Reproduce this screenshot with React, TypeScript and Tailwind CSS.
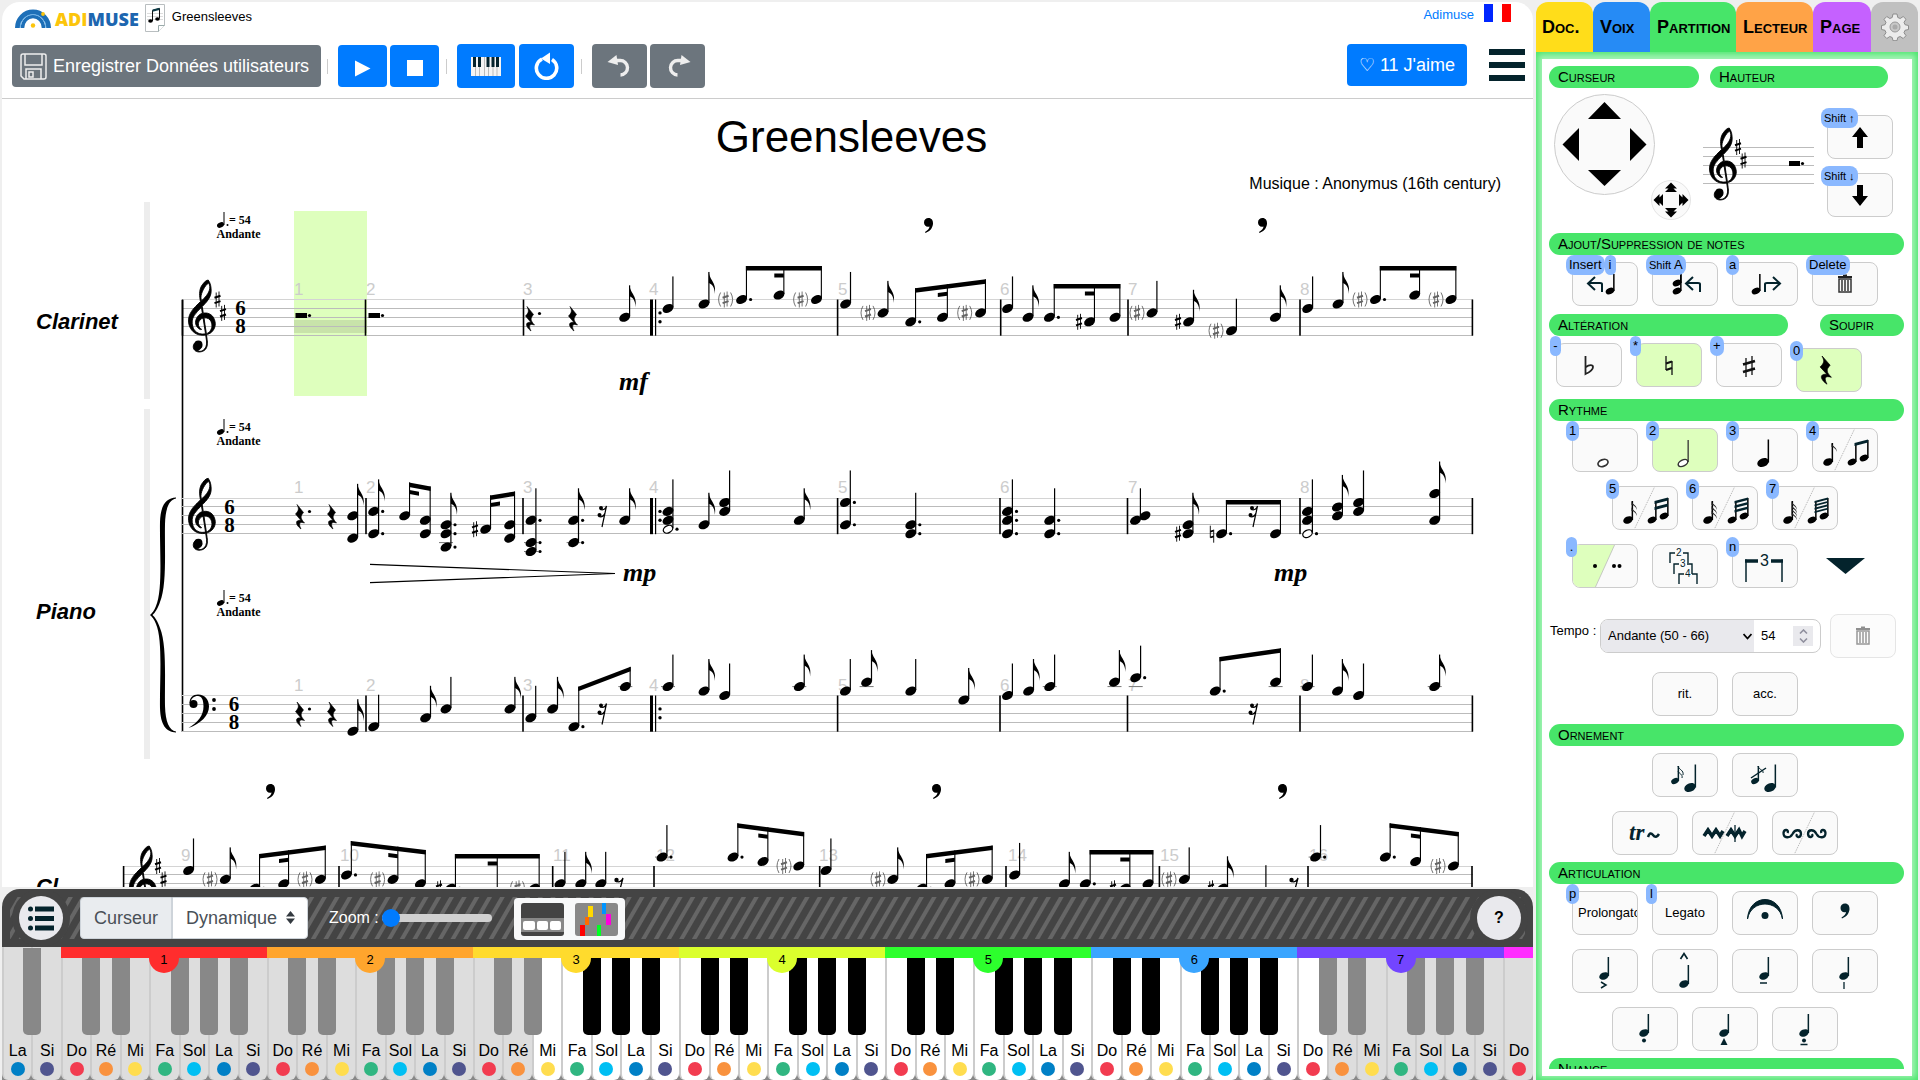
import React from "react";

/* ---------- Music engraving primitives ---------- */

const HALF = 4.46;

type Chord = {
  x: number;
  s: number[];
  eighth?: boolean;
  dot?: boolean;
  hollow?: number;
  second?: number;
  ledger?: number[];
};
type BeamGroup = { notes: Chord[]; y1: number; y2: number; sub?: number; dir?: 1 | -1 };
type Mark = { x: number; s: number; kind: "sharp" | "paren" | "natural" };
type Rest = { x: number; y: number; kind: "quarter" | "eighth" | "sixteenth"; dot?: boolean };
type StaffData = {
  y: number;
  x1: number;
  bars: number[];
  numbers: [number, number][];
  chords: Chord[];
  beams: BeamGroup[];
  marks: Mark[];
  rests: Rest[];
  repeat?: boolean;
};

const CLEF_PATH =
  "m12.049 3.5296c0.305 3.1263-2.019 5.6563-4.0772 7.7014-0.9349 0.897-0.155 0.148-0.6437 0.594-0.1022-0.479-0.2986-1.731-0.2802-2.11 0.1304-2.6939 2.3198-6.5875 4.2381-8.0236 0.309 0.5767 0.563 0.6231 0.763 1.8382zm0.651 16.142c-1.232-0.906-2.85-1.144-4.3336-0.885-0.1913-1.255-0.3827-2.51-0.574-3.764 2.3506-2.329 4.9066-5.0322 5.0406-8.5394 0.059-2.232-0.276-4.6714-1.678-6.4836-1.7004 0.12823-2.8995 2.156-3.8019 3.4165-1.4889 2.6705-1.1414 5.9169-0.57 8.7965-0.8094 0.952-1.9296 1.743-2.7274 2.734-2.3561 2.308-4.4085 5.43-4.0046 8.878 0.18332 3.334 2.5894 6.434 5.8702 7.227 1.2457 0.315 2.5639 0.346 3.8241 0.099 0.2199 2.25 1.0266 4.629 0.0925 6.813-0.7007 1.598-2.7875 3.004-4.3325 2.192-0.5994-0.316-0.1137-0.051-0.478-0.252 1.0698-0.257 1.9996-1.036 2.26-1.565 0.8378-1.464-0.3998-3.639-2.1554-3.358-2.262 0.046-3.1904 3.14-1.7356 4.685 1.3468 1.52 3.833 1.312 5.4301 0.318 1.8125-1.18 2.0395-3.544 1.8325-5.562-0.07-0.678-0.403-2.67-0.444-3.387 0.697-0.249 0.209-0.059 1.193-0.449 2.66-1.053 4.357-4.259 3.594-7.122-0.318-1.469-1.044-2.914-2.302-3.792zm0.561 5.757c0.214 1.991-1.053 4.321-3.079 4.96-0.136-0.795-0.172-1.011-0.2626-1.475-0.4822-2.46-0.744-4.987-1.116-7.481 1.6246-0.168 3.4576 0.543 4.0226 2.184 0.244 0.577 0.343 1.197 0.435 1.812zm-5.1486 5.196c-2.5441 0.141-4.9995-1.595-5.6343-4.081-0.749-2.153-0.5283-4.63 0.8207-6.504 1.1151-1.702 2.6065-3.105 4.0286-4.543 0.183 1.127 0.366 2.254 0.549 3.382-2.9906 0.782-5.0046 4.725-3.215 7.451 0.5324 0.764 1.9765 2.223 2.7655 1.634-1.102-0.683-2.0033-1.859-1.8095-3.227-0.0821-1.282 1.3699-2.911 2.6513-3.198 0.4384 2.869 0.9413 6.073 1.3797 8.943-0.5054 0.1-1.0211 0.143-1.536 0.143z";

const TrebleClef = ({ x, y }: { x: number; y: number }) => (
  <g transform={`translate(${x} ${y}) scale(1.765)`}>
    <path d={CLEF_PATH} stroke="#000" strokeWidth="0.5" />
    <circle cx="5.6" cy="36.6" r="2.3" />
  </g>
);

const BassClef = ({ x, y }: { x: number; y: number }) => (
  <g transform={`translate(${x} ${y})`}>
    <circle cx="5.5" cy="9.5" r="4" />
    <path d="M1.5 9C1.500 3 5 0 10 0C17 0 21 5 21 12C21 21 13 29 0.500 33.500C10 27.500 15.500 21 15.500 12C15.500 5 13.500 1.500 10 1.500C6 1.500 3 4 2.500 8Z" />
    <circle cx="26" cy="5.500" r="1.9" />
    <circle cx="26" cy="14.500" r="1.9" />
  </g>
);

const Sharp = ({ x, y }: { x: number; y: number }) => (
  <g transform={`translate(${x} ${y})`} stroke="#000" fill="none">
    <path d="M-1.3 -7V8M1.5 -8V7" strokeWidth="0.9" />
    <path d="M-3 -1.800L3 -3.800M-3 3.600L3 1.600" strokeWidth="2" />
  </g>
);

const Natural = ({ x, y }: { x: number; y: number }) => (
  <g transform={`translate(${x} ${y})`} stroke="#000" fill="none">
    <path d="M-1.700 -8V4M1.700 -4V9" strokeWidth="0.9" />
    <path d="M-1.700 -2L1.700 -3.200M-1.700 3.800L1.700 2.600" strokeWidth="1.8" />
  </g>
);

const ParenSharp = ({ x, y }: { x: number; y: number }) => (
  <g opacity="0.6">
    <Sharp x={x} y={y} />
    <path
      d={`M${x - 5} ${y - 7}q-4 7 0 14M${x + 5} ${y - 7}q4 7 0 14`}
      fill="none"
      stroke="#000"
      strokeWidth="0.9"
    />
  </g>
);

const Head = ({ x, y, hollow }: { x: number; y: number; hollow?: boolean }) =>
  hollow ? (
    <ellipse cx={x} cy={y} rx="5" ry="3.500" fill="#fff" stroke="#000" strokeWidth="1.300" transform={`rotate(-28 ${x} ${y})`} />
  ) : (
    <ellipse cx={x} cy={y} rx="5.800" ry="4.100" transform={`rotate(-28 ${x} ${y})`} />
  );

const QUARTER_REST =
  "M2 0L8.500 8C5 12 5.500 14 9.500 18.500C5 17 3 18.500 6 24.500C0 20 0 15 6 16L0.500 9.500C4 6 4 4 2 0Z";

const RestGlyph = ({ r }: { r: Rest }) => (
  <g transform={`translate(${r.x} ${r.y})`}>
    {r.kind === "quarter" && <path d={QUARTER_REST} transform="translate(-5 0)" stroke="#000" strokeWidth="0.6" />}
    {r.kind === "eighth" && (
      <g>
        <circle cx="-2.500" cy="3" r="2.200" />
        <path d="M-3 4.500Q2 6 4 1L0 16" fill="none" stroke="#000" strokeWidth="1.300" />
      </g>
    )}
    {r.kind === "sixteenth" && (
      <g>
        <circle cx="-1" cy="2" r="2" />
        <circle cx="-2.500" cy="9" r="2" />
        <path d="M-2 3.500Q3 5 4.500 0L0 21M-3.500 10.500Q1 12 3 7" fill="none" stroke="#000" strokeWidth="1.200" />
      </g>
    )}
    {r.dot && <circle cx="9.500" cy="7" r="1.600" />}
  </g>
);

const FLAG = "M0 0C1 9 8 10 6 22C6 15 3 12 0 11Z";

function Heads({ c, y }: { c: Chord; y: number }) {
  return (
    <g>
      {c.ledger?.map((l) => (
        <rect key={l} x={c.x - 7} y={y + l * HALF - 0.5} width="14" height="1" fill="#777" />
      ))}
      {c.s.map((s) => (
        <g key={s}>
          <Head x={c.x} y={y + s * HALF} />
          {c.dot && <circle cx={c.x + 9} cy={y + s * HALF} r="1.600" />}
        </g>
      ))}
      {c.hollow !== undefined && (
        <g>
          <Head x={c.x} y={y + c.hollow * HALF} hollow />
          <circle cx={c.x + 9} cy={y + c.hollow * HALF} r="1.600" />
        </g>
      )}
      {c.second !== undefined && <Head x={c.x + 9.5} y={y + c.second * HALF} />}
    </g>
  );
}

function ChordGlyph({ c, y }: { c: Chord; y: number }) {
  const top = y + Math.min(...c.s) * HALF - 32;
  const bottom = y + Math.max(...c.s, c.hollow ?? -9) * HALF - 1;
  const sx = c.x + 4.8;
  return (
    <g>
      <Heads c={c} y={y} />
      <rect x={sx - 0.5} y={top} width="1.200" height={bottom - top} />
      {c.eighth && <path d={FLAG} transform={`translate(${sx} ${top})`} />}
    </g>
  );
}

function Beam({ b, y }: { b: BeamGroup; y: number }) {
  const first = b.notes[0].x + 4.8;
  const last = b.notes[b.notes.length - 1].x + 5.3;
  const at = (x: number) => b.y1 + ((b.y2 - b.y1) * (x - first)) / (last - first);
  const sub = b.sub !== undefined ? b.notes[b.sub].x + 4.8 : 0;
  const end = sub + 9.5 * (b.dir ?? -1);
  return (
    <g>
      {b.notes.map((n) => {
        const sx = n.x + 4.8;
        return (
          <g key={n.x}>
            <Heads c={n} y={y} />
            <rect x={sx - 0.5} y={at(sx)} width="1.100" height={y + Math.max(...n.s) * HALF - 1 - at(sx)} />
          </g>
        );
      })}
      <path d={`M${first - 0.5} ${b.y1}L${last} ${b.y2}v4.500L${first - 0.5} ${b.y1 + 4.5}Z`} />
      {b.sub !== undefined && (
        <path d={`M${sub} ${at(sub) + 7.5}L${end} ${at(end) + 7.5}v4L${sub} ${at(sub) + 11.5}Z`} />
      )}
    </g>
  );
}

function Staff({ d }: { d: StaffData }) {
  return (
    <g>
      {[0, 2, 4, 6, 8].map((i) => (
        <rect key={i} x={d.x1} y={Math.round(d.y + i * HALF - 0.5)} width={1473 - d.x1} height="1" fill={i === 0 ? "#d4d4d4" : "#bbb"} />
      ))}
      {d.numbers.map(([n, x]) => (
        <text key={n} x={x} y={d.y - 5} fontSize="17" fill="#ccc">
          {n}
        </text>
      ))}
      {d.bars.map((x) => (
        <rect key={x} x={x - 0.8} y={d.y} width="1.600" height={8 * HALF + 0.5} />
      ))}
      {d.repeat && (
        <g>
          <rect x="650" y={d.y} width="3" height={8 * HALF + 0.5} />
          <rect x="655" y={d.y} width="1.200" height={8 * HALF + 0.5} />
          <circle cx="660" cy={d.y + 3 * HALF} r="1.700" />
          <circle cx="660" cy={d.y + 5 * HALF} r="1.700" />
        </g>
      )}
      {d.marks.map((m, i) => {
        const y = d.y + m.s * HALF;
        if (m.kind === "sharp") return <Sharp key={i} x={m.x} y={y} />;
        if (m.kind === "natural") return <Natural key={i} x={m.x} y={y} />;
        return <ParenSharp key={i} x={m.x} y={y} />;
      })}
      {d.rests.map((r, i) => (
        <RestGlyph key={i} r={r} />
      ))}
      {d.chords.map((c, i) => (
        <ChordGlyph key={i} c={c} y={d.y} />
      ))}
      {d.beams.map((b, i) => (
        <Beam key={i} b={b} y={d.y} />
      ))}
    </g>
  );
}

const Meter = ({ x, y }: { x: number; y: number }) => (
  <g fontFamily="Liberation Serif, serif" fontWeight="bold" fontSize="21" textAnchor="middle">
    <text x={x} y={y}>6</text>
    <text x={x} y={y + 18}>8</text>
  </g>
);

const TempoMark = ({ y }: { y: number }) => (
  <g fontFamily="Liberation Serif, serif" fontWeight="bold" fontSize="12">
    <ellipse cx="220.500" cy={y + 1} rx="3.700" ry="2.500" transform={`rotate(-25 220.500 ${y + 1})`} />
    <rect x="223.500" y={y - 12} width="1" height="13" />
    <circle cx="227.500" cy={y + 1} r="1" />
    <text x="229" y={y}>= 54</text>
    <text x="216.500" y={y + 14}>Andante</text>
  </g>
);

const Breath = ({ x, y }: { x: number; y: number }) => (
  <path
    transform={`translate(${x} ${y})`}
    d="M-4.500 4.500C-4.500 1.500 -2.500 0 0 0C3 0 4.800 2.300 4.500 6C4 10.500 1 13.500 -3 15L-3.500 14C-1 12.500 1 10.500 1 8.500C-2 9.500 -4.500 7.500 -4.500 4.500Z"
  />
);

const Dynamic = ({ x, y, children }: { x: number; y: number; children: React.ReactNode }) => (
  <text x={x} y={y} fontFamily="Liberation Serif, serif" fontStyle="italic" fontWeight="bold" fontSize="26">
    {children}
  </text>
);

const P = (x: number, s: number): Mark => ({ x, s, kind: "paren" });
const S = (x: number, s: number): Mark => ({ x, s, kind: "sharp" });
const q = (x: number, ...s: number[]): Chord => ({ x, s });
const qd = (x: number, ...s: number[]): Chord => ({ x, s, dot: true });
const e = (x: number, ...s: number[]): Chord => ({ x, s, eighth: true });
const ed = (x: number, ...s: number[]): Chord => ({ x, s, eighth: true, dot: true });
const led = (c: Chord, ...ledger: number[]): Chord => ({ ...c, ledger });

const clarinet: StaffData = {
  y: 299.5,
  x1: 182,
  repeat: true,
  bars: [182.5, 365.5, 523.5, 837.6, 1000.7, 1128, 1300, 1472.4],
  numbers: [[1, 294], [2, 366], [3, 523], [4, 649], [5, 838], [6, 1000], [7, 1128], [8, 1300]],
  rests: [
    { x: 530, y: 306.5, kind: "quarter", dot: true },
    { x: 573, y: 306.5, kind: "quarter" },
  ],
  marks: [
    S(217.5, 0), S(223, 3), P(725.6, 0), P(800.6, 0), P(868, 3), P(964.7, 3), S(1079, 5), P(1137, 3),
    S(1178, 5), P(1216, 7), P(1360, 0), P(1436, 0),
  ],
  chords: [
    e(624.7, 4), q(668, 2), e(704, 1), q(845.6, 1), e(883, 3), q(1007.6, 2), e(1028, 4), q(1152, 3),
    e(1188.6, 5), q(1231.5, 7), e(1275.4, 4), q(1307.7, 2), e(1338, 1),
  ],
  beams: [
    { notes: [qd(741.6, 0), q(779, -1), q(816.5, 0)], y1: 266, y2: 266, sub: 1 },
    { notes: [qd(910.7, 5), q(942.5, 4), q(980.6, 3)], y1: 288.3, y2: 279.3, sub: 1 },
    { notes: [qd(1049.4, 4), q(1089.6, 5), q(1115, 4)], y1: 284, y2: 284, sub: 1 },
    { notes: [qd(1375.5, 0), q(1414.7, -1), q(1451, 0)], y1: 266, y2: 266, sub: 1 },
  ],
};

const pianoTreble: StaffData = {
  y: 498,
  x1: 182,
  repeat: true,
  bars: [366, 523, 837.6, 1000, 1127.5, 1300, 1472.4],
  numbers: clarinet.numbers,
  rests: [
    { x: 300, y: 504.5, kind: "quarter", dot: true },
    { x: 332, y: 504.5, kind: "quarter" },
    { x: 602, y: 506, kind: "sixteenth" },
    { x: 1253, y: 506, kind: "sixteenth" },
  ],
  marks: [S(475, 7), S(1178, 8), { x: 1212, s: 8, kind: "natural" }],
  chords: [
    e(352.7, 4, 9), ed(373.7, 3, 8), led(ed(446, 6, 8, 11), 10), led(qd(531, 5, 10, 12), 10, 12),
    led(ed(573.6, 5, 10), 10), e(624.7, 5), { x: 668, s: [3, 5], hollow: 7 }, e(704, 6), q(724.7, 1, 3),
    e(799.3, 5), qd(845.4, 1, 6), qd(910.8, 6, 8), qd(1007.5, 3, 5, 8), qd(1049.7, 5, 8),
    { x: 1135.5, s: [5], second: 4 }, e(1188, 6, 8), { x: 1307.5, s: [3, 5], hollow: 8 }, e(1337.5, 2, 4),
    q(1358.6, 1, 3), e(1434.7, -1, 5),
  ],
  beams: [
    { notes: [q(404.7, 4), q(425.3, 5, 8)], y1: 482.5, y2: 486.5, sub: 0, dir: 1 },
    { notes: [q(485.7, 7), q(509.7, 6, 9)], y1: 495.5, y2: 491.5, sub: 0, dir: 1 },
    { notes: [qd(1221.6, 8), q(1275.6, 8)], y1: 500, y2: 500 },
  ],
};

const pianoBass: StaffData = {
  y: 695.5,
  x1: 182,
  repeat: true,
  bars: [366, 523, 837.6, 1000, 1127.5, 1300, 1472.4],
  numbers: clarinet.numbers,
  rests: [
    { x: 300, y: 702, kind: "quarter", dot: true },
    { x: 332, y: 702, kind: "quarter" },
    { x: 602, y: 703.5, kind: "sixteenth" },
    { x: 1253, y: 703.5, kind: "sixteenth" },
  ],
  marks: [],
  chords: [
    e(352.9, 8), q(373.7, 7), e(425.6, 5), q(446, 3), e(510, 3), q(530.8, 5), e(552.6, 3), led(q(668, -2), -2),
    e(704, -1), q(724.7, 0), led(e(799.3, -2), -2), q(845.4, -1), led(e(866.6, -3), -2), q(910.8, -1),
    e(963.8, 1), q(1007.5, 0), e(1028.6, -1), led(q(1049.7, -2), -2), led(e(1114.5, -3), -2),
    led(qd(1135.7, -4), -2), led(q(1307.5, -2), -2), e(1337.5, -1), q(1358.6, 0), led(e(1434.7, -2), -2),
  ],
  beams: [
    { notes: [qd(573.9, 7), led(q(625.3, -2), -2)], y1: 686.7, y2: 666.7 },
    { notes: [qd(1215.2, -1), led(q(1275.6, -3), -2)], y1: 657, y2: 648.3 },
  ],
};

const clarinetNext: StaffData = {
  y: 866,
  x1: 123,
  bars: [123.6, 339, 552.7, 654, 819.7, 1006, 1159.4, 1308, 1472],
  numbers: [[9, 181], [10, 340], [11, 553], [12, 656], [13, 819], [14, 1008], [15, 1160], [16, 1309]],
  rests: [
    { x: 619, y: 877, kind: "eighth" },
    { x: 1294, y: 877, kind: "eighth" },
  ],
  marks: [
    S(158, 0), S(163.5, 3), P(210, 3), P(305, 3), P(377.6, 3), S(439, 5), P(517.5, 5), P(784, 0), P(878, 3),
    P(972, 3), S(1113, 5), P(1169, 3), S(1211, 5), P(1438, 0),
  ],
  chords: [
    q(188.6, 1), e(225.3, 3), q(560, 4), e(580.8, 4), q(600.8, 4), led(qd(662, -2), -2), q(826, 1), e(892.8, 3),
    q(1014.7, 2), e(1064.4, 4), q(1184.3, 3), e(1222.6, 5), q(1261, 7), led(qd(1315.6, -2), -2),
  ],
  beams: [
    { notes: [qd(254.7, 5), q(283.7, 4), q(320.4, 3)], y1: 854, y2: 845.5, sub: 1 },
    { notes: [qd(346.5, 2), q(393, 3), q(420.4, 4)], y1: 841, y2: 850, sub: 1 },
    { notes: [qd(450.6, 5), q(492.4, 6), q(534.3, 5)], y1: 854, y2: 854, sub: 1 },
    { notes: [qd(733, -2), q(763, -1), q(798.8, 0)], y1: 823.3, y2: 832, sub: 1 },
    { notes: [qd(921.7, 5), q(950, 4), q(987.3, 3)], y1: 854, y2: 845.5, sub: 1 },
    { notes: [qd(1085.3, 4), q(1125, 5), q(1148, 4)], y1: 850, y2: 850, sub: 1 },
    { notes: [qd(1385.3, -2), q(1415.6, -1), q(1453.4, 0)], y1: 823.3, y2: 832, sub: 1 },
  ],
};

/* ---------- Score ---------- */

function Score() {
  return (
    <main className="min-h-0 flex-1 overflow-hidden bg-white">
      <h1 className="pt-[13px] pl-[168px] text-center text-[44px] leading-[50px]">Greensleeves</h1>
      <p className="mt-[10px] pr-[32px] text-right text-base leading-[24px]">Musique : Anonymus (16th century)</p>

      <section className="mt-[6px] flex h-[207px]">
        <h2 className="w-[142px] shrink-0 pt-[106px] pl-[34px] text-[22px] leading-[28px] font-bold italic">Clarinet</h2>
        <div className="h-[197px] w-[6px] shrink-0 bg-[#ededed]" />
        <svg className="shrink-0" width="1383" height="207" viewBox="150 202 1383 207">
          <rect x="294" y="211" width="73" height="185" fill="#deffbd" />
          <rect x="294" y="320" width="73" height="13" fill="#c8e3aa" />
          <Staff d={clarinet} />
          <rect x="181.700" y="300" width="1.600" height="109" />
          <TrebleClef x={188.5} y={280} />
          <Meter x={240.5} y={315} />
          <TempoMark y={224} />
          <rect x="295.500" y="313" width="11.500" height="5" />
          <circle cx="309.500" cy="315.500" r="1.600" />
          <rect x="368.500" y="313" width="11.500" height="5" />
          <circle cx="382.500" cy="315.500" r="1.600" />
          <Breath x={928.5} y={218} />
          <Breath x={1262.5} y={218} />
          <Dynamic x={619} y={390}>mf</Dynamic>
        </svg>
      </section>

      <section className="flex h-[360px]">
        <h2 className="w-[142px] shrink-0 pt-[189px] pl-[34px] text-[22px] leading-[28px] font-bold italic">Piano</h2>
        <div className="h-[350px] w-[6px] shrink-0 bg-[#ededed]" />
        <svg className="shrink-0" width="1383" height="360" viewBox="150 409 1383 360">
          <path d="M176 497.500C166 498 160.500 505 160 522C159.500 548 163 590 156 606C154.500 610 152 613.500 150 615C152 616.500 154.500 620 156 624C163 640 159.500 682 160 708C160.500 725 166 732 176 732.500L176 731.500C169 730 165.500 722 165 706C164.500 680 167 645 160 628C158 622 155 617 152.500 615C155 613 158 608 160 602C167 585 164.500 550 165 524C165.500 508 169 500 176 498.500Z" />
          <rect x="181.700" y="409" width="1.600" height="323" />
          <Staff d={pianoTreble} />
          <Staff d={pianoBass} />
          <TrebleClef x={188.5} y={478.3} />
          <BassClef x={188} y={694.5} />
          <Meter x={229.5} y={513.5} />
          <Meter x={234} y={710.5} />
          <TempoMark y={431} />
          <TempoMark y={602} />
          <path d="M370 564.300L615 573.500L370 582.700" fill="none" stroke="#000" strokeWidth="1.200" />
          <Dynamic x={623} y={581}>mp</Dynamic>
          <Dynamic x={1274} y={581}>mp</Dynamic>
        </svg>
      </section>

      <section className="flex h-[130px]">
        <h2 className="w-[98px] shrink-0 pt-[104px] pl-[34px] text-[22px] leading-[28px] font-bold italic">Cl.</h2>
        <svg className="shrink-0" width="1433" height="130" viewBox="100 769 1433 130">
          <Staff d={clarinetNext} />
          <TrebleClef x={129.5} y={846} />
          <Breath x={270.5} y={784} />
          <Breath x={936.5} y={784} />
          <Breath x={1282.5} y={784} />
        </svg>
      </section>
    </main>
  );
}

/* ---------- Header ---------- */

const Separator = () => <span className="h-[15px] w-px bg-[#ccc]" />;

function ToolButton({ label, className, children }: { label: string; className: string; children: React.ReactNode }) {
  return (
    <button aria-label={label} className={`flex items-center justify-center rounded ${className}`}>
      {children}
    </button>
  );
}

const UndoIcon = ({ flip }: { flip?: boolean }) => (
  <svg width="26" height="26" viewBox="0 0 26 26" className={flip ? "-scale-x-100" : ""}>
    <path d="M6 7.500H13A7.200 7.200 0 0 1 13.500 22" fill="none" stroke="#eee" strokeWidth="3.400" />
    <path d="M0.500 9L9.500 2L11 12Z" fill="#eee" />
  </svg>
);

function Header() {
  return (
    <header className="shrink-0 border-b border-[#ccc]">
      <div className="flex h-[30px] items-start pr-[22px] pl-[13px]">
        <div className="flex flex-1 items-center">
          <a href="#accueil" aria-label="Adimuse" className="flex items-center pt-[3px]">
            <svg width="36" height="21" viewBox="0 0 36 21">
              <path d="M2.500 20A15.500 16 0 0 1 33.500 20" fill="none" stroke="#1d6fb8" strokeWidth="5" />
              <path d="M7.500 20A10.500 11.500 0 0 1 28.500 20" fill="none" stroke="#1d6fb8" strokeWidth="3.500" />
              <path d="M5 20A13 13.500 0 0 1 31 20" fill="none" stroke="#6db1e6" strokeWidth="1" />
              <circle cx="18" cy="17.500" r="2.200" fill="#fcc50b" />
              <circle cx="28" cy="6" r="1.900" fill="#fcc50b" />
            </svg>
            <span className="ml-[4px] font-['Open_Sans',sans-serif] text-[18px] leading-[20px] font-extrabold text-[#fcc50b]">
              ADI<span className="text-[#1d66b0]">MUSE</span>
            </span>
          </a>
          <svg className="mt-[2px] ml-[6px]" width="20" height="28" viewBox="0 0 20 28">
            <path d="M0.500 0.500H19.500V21.500L13.500 27.500H0.500Z" fill="#fff" stroke="#b9bec0" />
            <path d="M19.500 21.500H13.500V27.500" fill="#fff" stroke="#9aa" />
            <path d="M2 9.500H18M2 12.500H18M2 15.500H18" stroke="#ddd" />
            <path d="M7.500 17V6.500L14.500 4.500V14.500" fill="none" stroke="#111" strokeWidth="1" />
            <path d="M7.500 5.500L14.500 3.800V6L7.500 7.800Z" fill="#0c3a45" />
            <ellipse cx="5.500" cy="17" rx="2.300" ry="1.700" />
            <ellipse cx="12.500" cy="15" rx="2.300" ry="1.700" />
          </svg>
          <span className="ml-[7px] text-[13px] leading-[20px]">Greensleeves</span>
        </div>
        <a href="#compte" className="pt-[4px] text-[13px] leading-[18px] text-[#007bff]">Adimuse</a>
        <span className="mt-[2px] ml-[10px] flex h-[18px] w-[27px]" role="img" aria-label="Français">
          <span className="flex-1 bg-[#0026ff]" />
          <span className="flex-1 bg-white" />
          <span className="flex-1 bg-[#ff0000]" />
        </span>
      </div>

      <div className="flex h-[66px] items-center pt-[2px] pr-[8px] pl-[10px]">
        <button className="flex h-[42px] w-[309px] items-center rounded bg-[#6c757d] pl-2 text-[18px] text-white">
          <svg width="27" height="27" viewBox="0 0 27 27" fill="none" stroke="#eee" strokeWidth="1.500">
            <path d="M1 3Q1 1 3 1H24Q26 1 26 3V24Q26 26 24 26H4L1 23Z" />
            <path d="M5 1V12H22V1M6 26V16H21V26M9 19H13V24H9Z" />
          </svg>
          <span className="ml-[6px] whitespace-nowrap">Enregistrer Données utilisateurs</span>
        </button>
        <div className="flex items-center pl-[6px]">
          <Separator />
          <div className="ml-[10px] flex gap-[3px]">
            <ToolButton label="Lecture" className="h-[42px] w-[49px] bg-[#007bff]">
              <svg width="17" height="17" viewBox="0 0 17 17" className="mt-1"><path d="M1 0.500L16.500 8.500L1 16.500Z" fill="#fff" /></svg>
            </ToolButton>
            <ToolButton label="Arrêt" className="h-[42px] w-[49px] bg-[#007bff]">
              <span className="mt-1 h-4 w-4 bg-white" />
            </ToolButton>
          </div>
          <span className="ml-[7px] flex"><Separator /></span>
          <div className="ml-[10px] flex gap-1">
            <ToolButton label="Clavier" className="h-[44px] w-[58px] bg-[#007bff]">
              <svg width="30" height="19" viewBox="0 0 30 19">
                <rect width="30" height="19" fill="#f4f4f4" />
                <path d="M4.500 10V19M8.500 10V19M13.500 0V19M17.500 10V19M22 10V19M26 10V19" stroke="#bbb" />
                <path d="M2 0H5V10H2ZM7 0H10V10H7ZM15.500 0H18.500V10H15.500ZM20.500 0H23.500V10H20.500ZM25 0H28V10H25Z" fill="#04232c" />
              </svg>
            </ToolButton>
            <ToolButton label="Boucle" className="h-[44px] w-[55px] bg-[#007bff]">
              <svg width="27" height="28" viewBox="0 0 27 28">
                <path d="M19 7.500A10.200 10.200 0 1 1 9 7" fill="none" stroke="#fff" strokeWidth="3.600" />
                <path d="M8 6.500L17 0.500V12Z" fill="#fff" />
              </svg>
            </ToolButton>
          </div>
          <span className="ml-[7px] flex"><Separator /></span>
          <div className="ml-[10px] flex gap-[3px]">
            <ToolButton label="Annuler" className="h-[44px] w-[55px] bg-[#6c757d]"><UndoIcon /></ToolButton>
            <ToolButton label="Rétablir" className="h-[44px] w-[55px] bg-[#6c757d]"><UndoIcon flip /></ToolButton>
          </div>
        </div>
        <button className="mr-[22px] mb-[2px] ml-auto h-[42px] w-[120px] rounded bg-[#007bff] text-[18px] whitespace-nowrap text-white">
          ♡ 11 J'aime
        </button>
        <button aria-label="Menu" className="mb-[2px] flex w-[36px] flex-col gap-[7px]">
          <span className="h-[6px] bg-[#04232c]" />
          <span className="h-[6px] bg-[#04232c]" />
          <span className="h-[6px] bg-[#04232c]" />
        </button>
      </div>
    </header>
  );
}

/* ---------- Bottom bar & keyboard ---------- */

function BottomBar() {
  return (
    <div className="flex h-[58px] shrink-0 items-center rounded-t-[18px] bg-[#444] px-2">
      <div className="flex h-[42px] flex-1 items-center bg-[repeating-linear-gradient(120deg,#444_0px,#444_6px,#666_7px,#666_10px,#444_11px)] pr-[4px] pl-[9px]">
        <button aria-label="Liste" className="flex h-11 w-11 items-center justify-center rounded-full bg-[#e9e9ed] shadow-[0_0_0_7px_#444]">
          <svg width="26" height="25" viewBox="0 0 26 25" fill="#04232c">
            <circle cx="2.500" cy="3" r="2.500" /><rect x="7" y="0.500" width="19" height="5" />
            <circle cx="2.500" cy="12.500" r="2.500" /><rect x="7" y="10" width="19" height="5" />
            <circle cx="2.500" cy="22" r="2.500" /><rect x="7" y="19.500" width="19" height="5" />
          </svg>
        </button>
        <label htmlFor="cursor" className="ml-[17px] flex h-[42px] w-[92px] items-center justify-center rounded-l border border-[#ced4da] bg-[#e9ecef] text-[18px] text-[#495057]">
          Curseur
        </label>
        <div className="relative">
          <select id="cursor" defaultValue="d" className="h-[42px] w-[136px] appearance-none rounded-r border border-[#ced4da] bg-white pl-[13px] text-[18px] text-[#495057]">
            <option value="d">Dynamique</option>
          </select>
          <svg className="pointer-events-none absolute top-[14px] right-[13px]" width="9" height="13" viewBox="0 0 9 13" fill="#343a40">
            <path d="M4.500 0L9 5.500H0ZM4.500 13L9 7.500H0Z" />
          </svg>
        </div>
        <label htmlFor="zoom" className="ml-[21px] text-base text-white">Zoom :</label>
        <input
          id="zoom"
          type="range"
          defaultValue="0"
          className="ml-[3px] h-[18px] w-[110px] appearance-none bg-transparent [&::-webkit-slider-runnable-track]:h-[8px] [&::-webkit-slider-runnable-track]:rounded [&::-webkit-slider-runnable-track]:bg-[#d0d0d0] [&::-webkit-slider-thumb]:-mt-[5px] [&::-webkit-slider-thumb]:h-[18px] [&::-webkit-slider-thumb]:w-[18px] [&::-webkit-slider-thumb]:appearance-none [&::-webkit-slider-thumb]:rounded-full [&::-webkit-slider-thumb]:bg-[#007bff]"
        />
        <div className="mt-[2px] ml-[22px] flex h-[42px] items-center gap-[11px] rounded bg-[#f8f9fa] px-[7px]">
          <button aria-label="Afficher le clavier">
            <svg width="43" height="33" viewBox="0 0 43 33">
              <rect width="43" height="33" rx="3" fill="#444" />
              <rect y="15" width="43" height="14" fill="#888" />
              <rect x="2" y="18" width="12" height="9" rx="2" fill="#fff" />
              <rect x="16" y="18" width="11" height="9" rx="2" fill="#fff" />
              <rect x="29" y="18" width="11" height="9" rx="2" fill="#fff" />
            </svg>
          </button>
          <button aria-label="Afficher les notes">
            <svg width="43" height="33" viewBox="0 0 43 33">
              <rect width="43" height="33" rx="3" fill="#888" />
              <rect x="5" y="22" width="5" height="11" fill="#f00" />
              <rect x="10" y="14" width="4" height="8" fill="#ff6a00" />
              <rect x="13" y="3" width="5" height="11" fill="#ffd800" />
              <rect x="22" y="22" width="4" height="11" fill="#00ff21" />
              <rect x="27" y="0" width="4" height="11" fill="#0094ff" />
              <rect x="31" y="11" width="5" height="11" fill="#ff00dc" />
            </svg>
          </button>
        </div>
        <button aria-label="Aide" className="ml-auto h-11 w-11 rounded-full bg-[#e9e9ed] text-base font-bold shadow-[0_0_0_7px_#444]">?</button>
      </div>
    </div>
  );
}

const NOTE_NAMES = ["Do", "Ré", "Mi", "Fa", "Sol", "La", "Si"];
const NOTE_COLORS = ["bg-[#f23c50]", "bg-[#f9923e]", "bg-[#ffdd4f]", "bg-[#30b681]", "bg-[#00bff3]", "bg-[#0080c6]", "bg-[#50558f]"];
const OCTAVES = [
  { n: 1, c: "bg-[#ff2d2d]" },
  { n: 2, c: "bg-[#ffa52d]" },
  { n: 3, c: "bg-[#ffdb2d]" },
  { n: 4, c: "bg-[#dbff2d]" },
  { n: 5, c: "bg-[#2dff2d]" },
  { n: 6, c: "bg-[#3aa5ff]" },
  { n: 7, c: "bg-[#7345ff]" },
];

function Keyboard() {
  const keys = Array.from({ length: 52 }, (_, i) => ({ i, note: (i + 5) % 7 }));
  return (
    <div className="relative flex h-[133px] shrink-0 bg-[#888]">
      {keys.map(({ i, note }) => {
        const on = i >= 18 && i <= 44;
        const sharp = note !== 2 && note !== 6 && i < 51;
        const sharpOn = i >= 19 && i <= 43;
        return (
          <button
            key={i}
            className={`relative flex min-w-0 flex-1 flex-col items-center justify-end rounded-b-md border-l-2 border-[#ccc] pb-1 text-base leading-[18px] ${on ? "bg-white" : "bg-[#ddd]"}`}
          >
            <span>{NOTE_NAMES[note]}</span>
            <span className={`mt-[2px] h-[14px] w-[14px] rounded-full ${NOTE_COLORS[note]}`} />
            {sharp && (
              <span className={`absolute top-[1px] -right-[10px] z-10 h-[87px] w-[18px] rounded-b-[5px] ${sharpOn ? "bg-black" : "bg-[#888]"}`} />
            )}
          </button>
        );
      })}
      <div className="absolute inset-x-0 top-0 z-20 flex h-[11px]">
        <span className="flex-[2]" />
        {OCTAVES.map((o) => (
          <span key={o.n} className={`flex flex-[7] justify-center ${o.c}`}>
            <span className={`flex h-[26px] w-[30px] items-center justify-center rounded-b-full text-[13px] ${o.c}`}>{o.n}</span>
          </span>
        ))}
        <span className="flex-1 bg-[#ff2dff]" />
      </div>
    </div>
  );
}

/* ---------- Right panel ---------- */

const INK = "#04232c";

function Pad({
  label,
  badge,
  active,
  faded,
  children,
}: {
  label: string;
  badge?: React.ReactNode;
  active?: boolean;
  faded?: boolean;
  children: React.ReactNode;
}) {
  return (
    <div className={`relative ${faded ? "opacity-50" : ""}`}>
      <button
        aria-label={label}
        className={`flex h-[44px] w-[66px] items-center justify-center overflow-hidden rounded-lg border border-[#ccc] text-[13px] ${active ? "bg-[#deffbd]" : "bg-[#fafafa]"}`}
      >
        {children}
      </button>
      {badge && <span className="absolute -top-[7px] -left-[6px] flex">{badge}</span>}
    </div>
  );
}

const Key = ({ children, small }: { children: React.ReactNode; small?: boolean }) => (
  <kbd className={`flex h-[20px] min-w-[11px] items-center justify-center rounded-lg bg-[#8ab8ff] px-[3px] font-[Liberation_Sans,sans-serif] whitespace-pre ${small ? "text-[11px]" : "text-[13px]"}`}>
    {children}
  </kbd>
);

const Icon = ({ children }: { children: React.ReactNode }) => (
  <svg width="66" height="44" viewBox="0 0 66 44" className="shrink-0" fill={INK}>
    {children}
  </svg>
);

function Title({ children, className = "" }: { children: React.ReactNode; className?: string }) {
  return (
    <h3 className={`h-[22px] rounded-full bg-[#47e569] pl-[9px] text-[15px] leading-[22px] [font-variant:small-caps] ${className}`}>{children}</h3>
  );
}

const Row = ({ children, className = "" }: { children: React.ReactNode; className?: string }) => (
  <div className={`flex justify-center gap-[14px] pr-[3px] ${className}`}>{children}</div>
);

/* One upright note centred on its head, with a stem of the given height */
const Mini = ({ x, y, h = 19, r = 5, fill = "#000" }: { x: number; y: number; h?: number; r?: number; fill?: string }) => (
  <g fill={fill}>
    <ellipse cx={x} cy={y} rx={r} ry={r * 0.7} transform={`rotate(-25 ${x} ${y})`} />
    <rect x={x + r - 1.4} y={y - h} width="1.500" height={h} />
  </g>
);

const Slash = () => <path d="M43 0L22 44" stroke="#aaa" strokeWidth="0.8" strokeDasharray="1.500 1" fill="none" />;

function Subdivision({ n }: { n: number }) {
  const lines = Array.from({ length: n }, (_, i) => i);
  const gap = n === 1 ? 0 : n === 2 ? 6 : n === 3 ? 4.5 : 3.4;
  const thick = n < 3 ? 3 : n === 3 ? 2.6 : 1.9;
  return (
    <Icon>
      <Slash />
      <Mini x={16} y={34} h={19} />
      {lines.map((i) => (
        <path key={i} d={`M19.500 ${15 + i * gap}c1 4 6 4 5 9c0 -3 -3 -5 -5 -5Z`} fill="#222" />
      ))}
      <Mini x={40} y={34} h={18} r={4.5} />
      <Mini x={52} y={30} h={18} r={4.5} />
      {lines.map((i) => (
        <path key={i} d={`M42.500 ${15 + i * gap}L56 ${11.5 + i * gap}v${thick}L42.500 ${15 + thick + i * gap}Z`} />
      ))}
    </Icon>
  );
}

const Trash = () => (
  <Icon>
    <path d="M26 14H40V16H26ZM31 12.500H35V14H31Z" fill="#222" />
    <path d="M27 17H39V30H27Z" fill="none" stroke="#333" strokeWidth="1.500" />
    <path d="M30 18V29M33 18V29M36 18V29" stroke="#333" strokeWidth="1.500" />
  </Icon>
);

const TABS = [
  { t: "Doc.", c: "w-[57px] bg-[#ffdd1a] pl-[6px]" },
  { t: "Voix", c: "w-[57px] bg-[#268bf5] pl-[7px]" },
  { t: "Partition", c: "w-[86px] bg-[#47e569] pl-[7px]" },
  { t: "Lecteur", c: "w-[77px] bg-[#ffa347] pl-[7px]" },
  { t: "Page", c: "w-[58px] bg-[#c561ff] pl-[7px]" },
];

function Artic({ children, y = 27 }: { children: React.ReactNode; y?: number }) {
  return (
    <Icon>
      <Mini x={32} y={y} r={5} fill={INK} />
      {children}
    </Icon>
  );
}

function Panel() {
  return (
    <aside className="flex w-[382px] shrink-0 flex-col pt-[2px]">
      <nav className="flex h-[50px] shrink-0 text-[18px] font-bold [font-variant:small-caps]">
        {TABS.map((t) => (
          <button key={t.t} className={`flex items-center rounded-t-[12px] whitespace-nowrap [font-variant:small-caps] ${t.c}`}>
            {t.t}
          </button>
        ))}
        <button aria-label="Réglages" className="flex flex-1 items-center justify-center rounded-t-[12px] bg-[#c0c0c0]">
          <svg width="28" height="28" viewBox="0 0 28 28">
            <path
              d="M12 1h4l.8 3.500 2.400 1 3-2 2.800 2.800-2 3 1 2.400L27.500 12.500v4l-3.500.8-1 2.400 2 3-2.800 2.800-3-2-2.400 1-.8 3.200h-4l-.8-3.200-2.400-1-3 2L3 22.700l2-3-1-2.400-3.500-.8v-4L4 11.700l1-2.400-2-3L5.800 3.500l3 2 2.400-1Z"
              fill="#ececec"
              stroke="#8c8c8c"
            />
            <circle cx="14" cy="14" r="5" fill="#c8c8c8" stroke="#999" />
            <circle cx="14" cy="14" r="2.500" fill="#aaa" />
          </svg>
        </button>
      </nav>
      <div className="flex min-h-0 flex-1 flex-col bg-[#a3f2b5] px-[6px] pt-[7px] pb-[4px] shadow-[inset_0_0_6px_2px_#47e569]">
        <div className="min-h-0 flex-1 bg-white p-[7px] pr-[8px]">
          <div className="h-full overflow-hidden">
            <div className="flex gap-[11px]">
              <Title className="w-[150px]">Curseur</Title>
              <Title className="w-[178px]">Hauteur</Title>
            </div>
            <div className="flex h-[145px] items-start">
              <svg className="mt-[6px] ml-[5px] shrink-0" width="101" height="101" viewBox="0 0 101 101" role="img" aria-label="Déplacer le curseur">
                <circle cx="50.500" cy="50.500" r="50" fill="#fafafa" stroke="#ccc" />
                <path d="M50.500 8L67 25H34ZM50.500 92L67 76H34ZM8.500 50.500L25 34V67ZM92.500 50.500L76 34V67Z" />
              </svg>
              <svg className="mt-[92px] -ml-[4px] shrink-0" width="40" height="40" viewBox="0 0 40 40" role="img" aria-label="Déplacer par groupe">
                <circle cx="20" cy="20" r="19.500" fill="#fafafa" stroke="#e4e4e4" />
                <path d="M20 2.500L26 8.500H14ZM20 6L26 12H14ZM20 37.500L26 31.500H14ZM20 34L26 28H14ZM2.500 20L8.500 14V26ZM6 20L12 14V26ZM37.500 20L31.500 14V26ZM34 20L28 14V26Z" />
              </svg>
              <svg className="mt-[39px] ml-[12px] shrink-0" width="111" height="74" viewBox="1703 126 111 74">
                {[146, 155, 164, 173, 182].map((y) => (
                  <rect key={y} x="1703" y={y} width="111" height="1" fill="#bbb" />
                ))}
                <TrebleClef x={1709.5} y={127} />
                <Sharp x={1738} y={146} />
                <Sharp x={1743.5} y={159.5} />
                <rect x="1789" y="160" width="11" height="5" />
                <circle cx="1802.500" cy="162.500" r="1.600" />
              </svg>
              <div className="mt-[27px] ml-[13px] flex flex-col gap-[14px]">
                <Pad label="Monter" badge={<Key small>Shift ↑</Key>}>
                  <Icon><path d="M33 12L41 22H36V33H30V22H25Z" fill="#000" /></Icon>
                </Pad>
                <Pad label="Descendre" badge={<Key small>Shift ↓</Key>}>
                  <Icon><path d="M33 33L41 23H36V12H30V23H25Z" fill="#000" /></Icon>
                </Pad>
              </div>
            </div>

            <Title>Ajout/Suppression de notes</Title>
            <Row className="mt-[7px]">
              <Pad label="Insérer avant" badge={<><Key>Insert</Key><Key>i</Key></>}>
                <Icon><Mini x={38} y={29} r={4.5} h={17} /><path d="M30 30V22Q30 21 28 21H17M23 15L16 21.500L23 28" fill="none" stroke={INK} strokeWidth="2" /></Icon>
              </Pad>
              <Pad label="Ajouter à l'accord" badge={<Key><small className="text-[11px]">Shift </small>A</Key>}>
                <Icon><Mini x={25} y={21} r={4.5} h={10} /><Mini x={25} y={29} r={4.5} h={17} /><path d="M48 30V22Q48 21 46 21H34M41 15L34 21.500L41 28" fill="none" stroke={INK} strokeWidth="2" /></Icon>
              </Pad>
              <Pad label="Insérer après" badge={<Key>a</Key>}>
                <Icon><Mini x={24} y={29} r={4.5} h={17} /><path d="M33 30V22Q33 21 35 21H47M41 15L48 21.500L41 28" fill="none" stroke={INK} strokeWidth="2" /></Icon>
              </Pad>
              <Pad label="Supprimer" badge={<Key>Delete</Key>}><Trash /></Pad>
            </Row>

            <div className="mt-[8px] flex justify-between">
              <Title className="w-[239px]">Altération</Title>
              <Title className="w-[84px]">Soupir</Title>
            </div>
            <div className="mt-[7px] flex gap-[14px] pl-[7px]">
              <Pad label="Bémol" badge={<Key>-</Key>}>
                <Icon><path d="M29.500 13V31C34 29 37 26 37 24C37 21.500 33 21.500 30 24" fill="none" stroke="#222" strokeWidth="1.800" /></Icon>
              </Pad>
              <Pad label="Bécarre" active badge={<Key>*</Key>}>
                <Icon><path d="M30 13V27M36 18V32" fill="none" stroke="#111" strokeWidth="1.300" /><path d="M30 20.500L36 18.500M30 27L36 25" stroke="#111" strokeWidth="2.300" /></Icon>
              </Pad>
              <Pad label="Dièse" badge={<Key>+</Key>}>
                <Icon><path d="M30 15V34M36 13V32" fill="none" stroke="#111" strokeWidth="1.300" /><path d="M27 21.500L39 18M27 29L39 25.500" stroke="#111" strokeWidth="2.600" /></Icon>
              </Pad>
              <div className="pt-[5px]">
                <Pad label="Soupir" active badge={<Key>0</Key>}>
                  <Icon><path d={QUARTER_REST} transform="translate(23.500 8) scale(1.250 1.150)" fill="#000" stroke="#000" strokeWidth="0.6" /></Icon>
                </Pad>
              </div>
            </div>

            <Title className="mt-[7px]">Rythme</Title>
            <Row className="mt-[7px]">
              <Pad label="Ronde" badge={<Key>1</Key>}>
                <Icon><ellipse cx="31" cy="35" rx="5.200" ry="3.300" transform="rotate(-20 31 35)" fill="#fff" stroke="#333" strokeWidth="1.700" /></Icon>
              </Pad>
              <Pad label="Blanche" active badge={<Key>2</Key>}>
                <Icon><ellipse cx="31" cy="35" rx="5.200" ry="3" transform="rotate(-28 31 35)" fill="#fff" stroke="#333" strokeWidth="1.500" /><rect x="35.500" y="12" width="1.300" height="22" fill="#333" /></Icon>
              </Pad>
              <Pad label="Noire" badge={<Key>3</Key>}><Icon><Mini x={31} y={34.5} r={6} h={23} /></Icon></Pad>
              <Pad label="Croche" badge={<Key>4</Key>}><Subdivision n={1} /></Pad>
            </Row>
            <Row className="mt-[14px]">
              <Pad label="Double croche" badge={<Key>5</Key>}><Subdivision n={2} /></Pad>
              <Pad label="Triple croche" badge={<Key>6</Key>}><Subdivision n={3} /></Pad>
              <Pad label="Quadruple croche" badge={<Key>7</Key>}><Subdivision n={4} /></Pad>
            </Row>
            <Row className="mt-[14px]">
              <Pad label="Point" badge={<Key>.</Key>}>
                <Icon><path d="M0 0H43L23 44H0Z" fill="#deffbd" /><path d="M43 0L23 44" stroke="#bbb" strokeWidth="0.800" /><g fill="#000"><circle cx="23" cy="22" r="2" /><circle cx="42" cy="22" r="2" /><circle cx="47.500" cy="22" r="2" /></g></Icon>
              </Pad>
              <Pad label="Multiolets">
                <Icon>
                  <path d="M18 19V9H23M31 9H36V19M22 30V20H27M35 20H40V30M27 40V30H32M40 30H45V40" fill="none" stroke={INK} strokeWidth="1.400" />
                  <text x="24" y="12" fontSize="10">2</text><text x="28" y="23" fontSize="10">3</text><text x="33" y="33" fontSize="10">4</text>
                </Icon>
              </Pad>
              <Pad label="Triolet" badge={<Key>n</Key>}>
                <Icon><path d="M13 17H26M39 17H51" stroke={INK} strokeWidth="3.500" /><path d="M14 15.500V38M50 15.500V38" stroke={INK} strokeWidth="1.500" /><text x="28" y="22" fontSize="16">3</text></Icon>
              </Pad>
              <button aria-label="Plus de rythmes" className="flex h-[44px] w-[66px] items-center justify-center">
                <svg width="39" height="16" viewBox="0 0 39 16"><path d="M0 0H39L19.500 16Z" fill={INK} /></svg>
              </button>
            </Row>

            <div className="mt-[26px] flex">
              <label htmlFor="tempo" className="w-[51px] pt-[8px] pl-[1px] text-[13px] leading-[18px] whitespace-nowrap">Tempo :</label>
              <div className="mt-[5px] flex h-[34px] w-[221px] overflow-hidden rounded-lg border border-[#ccc]">
                <div className="relative h-full w-[153px] bg-[#e9e9ed]">
                  <select id="tempo" defaultValue="a" className="h-full w-full appearance-none bg-transparent pl-[7px] text-[13px]">
                    <option value="a">Andante (50 - 66)</option>
                  </select>
                  <svg className="pointer-events-none absolute top-[13px] right-[2px]" width="9" height="7" viewBox="0 0 9 7"><path d="M0.500 1L4.500 5.500L8.500 1" fill="none" stroke="#000" strokeWidth="1.800" /></svg>
                </div>
                <input aria-label="Battements par minute" type="text" inputMode="numeric" defaultValue="54" className="w-[39px] pl-[7px] text-[13px]" />
                <button aria-label="Ajuster le tempo" className="mt-[6px] flex h-[20px] w-[20px] items-center justify-center bg-[#e9e9ed]">
                  <svg width="9" height="14" viewBox="0 0 9 14"><path d="M1 4.500L4.500 1L8 4.500M1 9.500L4.500 13L8 9.500" fill="none" stroke="#8f8f9d" strokeWidth="1.600" /></svg>
                </button>
              </div>
              <div className="ml-[9px]"><Pad label="Supprimer le tempo" faded><Trash /></Pad></div>
            </div>
            <Row className="mt-[14px]">
              <Pad label="rit.">rit.</Pad>
              <Pad label="acc.">acc.</Pad>
            </Row>

            <Title className="mt-[8px]">Ornement</Title>
            <Row className="mt-[7px]">
              <Pad label="Appoggiature">
                <Icon><Mini x={23} y={28} r={4} h={15} fill={INK} /><path d="M26 13C27 17 32 17 31 22M26 18C27 21 31 21 30 25" fill="none" stroke={INK} /><Mini x={38} y={34.5} r={6} h={23} fill={INK} /></Icon>
              </Pad>
              <Pad label="Acciaccature">
                <Icon><Mini x={23} y={28} r={4} h={15} fill={INK} /><path d="M26 13C27 17 32 17 31 20" fill="none" stroke={INK} /><path d="M19 25L34 15" stroke={INK} strokeWidth="1.500" /><Mini x={38} y={34.5} r={6} h={23} fill={INK} /></Icon>
              </Pad>
            </Row>
            <Row className="mt-[14px]">
              <Pad label="Trille">
                <Icon>
                  <text x="17" y="29" fontFamily="Liberation Serif, serif" fontStyle="italic" fontWeight="bold" fontSize="23">tr</text>
                  <path d="M36 26Q38 20 41 24T47 23" fill="none" stroke={INK} strokeWidth="2.500" />
                </Icon>
              </Pad>
              <Pad label="Mordant">
                <Icon><Slash /><path d="M12 25L16 19L20 25L24 19L28 25L31 20M35 25L39 19L43 25L47 19L50 25L53 20" fill="none" stroke={INK} strokeWidth="3.500" /><path d="M43 14V31" stroke={INK} strokeWidth="1.300" /></Icon>
              </Pad>
              <Pad label="Gruppetto">
                <Icon>
                  <Slash />
                  <path d="M15.500 22C17.500 18.500 12 17.500 11.500 22C11.500 27.500 18 27.500 20.500 23C23 18 29 18 29 23C28.500 27.500 23 26.500 25 23" fill="none" stroke={INK} strokeWidth="2.300" />
                  <path d="M49.500 22C47.500 18.500 53 17.500 53.500 22C53.500 27.500 47 27.500 44.500 23C42 18 36 18 36 23C36.500 27.500 42 26.500 40 23" fill="none" stroke={INK} strokeWidth="2.300" />
                </Icon>
              </Pad>
            </Row>

            <Title className="mt-[7px]">Articulation</Title>
            <Row className="mt-[7px]">
              <Pad label="Prolongato" badge={<Key>p</Key>}><span className="w-full pl-[5px] text-left">Prolongato</span></Pad>
              <Pad label="Legato" badge={<Key>l</Key>}>Legato</Pad>
              <Pad label="Point d'orgue">
                <Icon><path d="M15.500 28C17 2 49 2 50.500 28C47 8 19 8 15.500 28Z" stroke={INK} strokeWidth="1" /><circle cx="33" cy="24.500" r="3.500" /></Icon>
              </Pad>
              <Pad label="Respiration"><Icon><g transform="translate(33 12.500)"><Breath x={0} y={0} /></g></Icon></Pad>
            </Row>
            <Row className="mt-[14px]">
              <Pad label="Accent"><Artic><path d="M29 33L34 36L29 39" fill="none" stroke={INK} strokeWidth="1.500" /></Artic></Pad>
              <Pad label="Marcato"><Artic y={35}><path d="M28.500 10L32 4.500L35.500 10" fill="none" stroke={INK} strokeWidth="1.700" /></Artic></Pad>
              <Pad label="Tenuto"><Artic><path d="M28 34H35" stroke={INK} strokeWidth="1.500" /></Artic></Pad>
              <Pad label="Staccatissimo"><Artic><path d="M32 33V40" stroke={INK} strokeWidth="1.300" /></Artic></Pad>
            </Row>
            <Row className="mt-[14px]">
              <Pad label="Staccato"><Artic y={26}><circle cx="32" cy="33.500" r="2" /></Artic></Pad>
              <Pad label="Martelé"><Artic y={26}><path d="M32 31L35.500 38H28.500Z" /></Artic></Pad>
              <Pad label="Louré"><Artic y={26}><circle cx="32" cy="33.500" r="2" /><path d="M28.500 37.500H35.500" stroke={INK} strokeWidth="1.300" /></Artic></Pad>
            </Row>

            <Title className="mt-[7px]">Nuance</Title>
          </div>
        </div>
      </div>
    </aside>
  );
}

export default function App() {
  return (
    <div className="flex h-screen overflow-hidden bg-[#efefef] pr-[2px] pl-[2px] font-['Liberation_Sans',sans-serif] text-black">
      <div className="flex min-w-0 flex-1 flex-col pt-[2px] pr-[3px]">
        <div className="flex min-h-0 flex-1 flex-col overflow-hidden rounded-t-[18px] bg-white">
          <Header />
          <Score />
        </div>
        <div className="h-[2px] shrink-0" />
        <BottomBar />
        <Keyboard />
      </div>
      <Panel />
    </div>
  );
}
